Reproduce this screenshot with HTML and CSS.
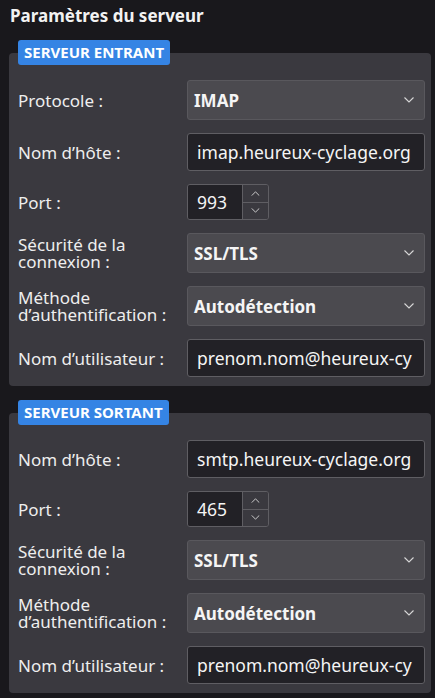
FILE: index.html
```html
<!DOCTYPE html>
<html>
<head>
  <title>Paramètres du serveur</title>
  <link rel="stylesheet" href="styles.css">
</head>
<body>
  <h1 class="page-title">Paramètres du serveur</h1>

  <section class="server">
    <div class="badge">SERVEUR ENTRANT</div>
    <div class="card">
      <label class="label">Protocole :</label>
      <div class="select"><span>IMAP</span>
        <svg class="chevron" viewBox="0 0 10 6"><path d="M0.5 0.5 L5 5 L9.5 0.5"/></svg>
      </div>

      <label class="label">Nom d’hôte :</label>
      <div class="input">imap.heureux-cyclage.org</div>

      <label class="label">Port :</label>
      <div class="spin">
        <div class="spin-value">993</div>
        <div class="spin-buttons">
          <div class="spin-btn"><svg viewBox="0 0 10 6"><path d="M0.5 5.5 L5 1 L9.5 5.5"/></svg></div>
          <div class="spin-btn"><svg viewBox="0 0 10 6"><path d="M0.5 0.5 L5 5 L9.5 0.5"/></svg></div>
        </div>
      </div>

      <label class="label">Sécurité de la connexion :</label>
      <div class="select"><span>SSL/TLS</span>
        <svg class="chevron" viewBox="0 0 10 6"><path d="M0.5 0.5 L5 5 L9.5 0.5"/></svg>
      </div>

      <label class="label">Méthode d’authentification :</label>
      <div class="select"><span>Autodétection</span>
        <svg class="chevron" viewBox="0 0 10 6"><path d="M0.5 0.5 L5 5 L9.5 0.5"/></svg>
      </div>

      <label class="label">Nom d’utilisateur :</label>
      <div class="input">prenom.nom@heureux-cy</div>
    </div>
  </section>

  <section class="server">
    <div class="badge">SERVEUR SORTANT</div>
    <div class="card">
      <label class="label">Nom d’hôte :</label>
      <div class="input">smtp.heureux-cyclage.org</div>

      <label class="label">Port :</label>
      <div class="spin">
        <div class="spin-value">465</div>
        <div class="spin-buttons">
          <div class="spin-btn"><svg viewBox="0 0 10 6"><path d="M0.5 5.5 L5 1 L9.5 5.5"/></svg></div>
          <div class="spin-btn"><svg viewBox="0 0 10 6"><path d="M0.5 0.5 L5 5 L9.5 0.5"/></svg></div>
        </div>
      </div>

      <label class="label">Sécurité de la connexion :</label>
      <div class="select"><span>SSL/TLS</span>
        <svg class="chevron" viewBox="0 0 10 6"><path d="M0.5 0.5 L5 5 L9.5 0.5"/></svg>
      </div>

      <label class="label">Méthode d’authentification :</label>
      <div class="select"><span>Autodétection</span>
        <svg class="chevron" viewBox="0 0 10 6"><path d="M0.5 0.5 L5 5 L9.5 0.5"/></svg>
      </div>

      <label class="label">Nom d’utilisateur :</label>
      <div class="input">prenom.nom@heureux-cy</div>
    </div>
  </section>
</body>
</html>
```

FILE: styles.css
```css
body {
  margin: 0;
  padding: 0 4px 0 9px;
  background-color: #19181c;
  color: #eeeeee;
  font-family: "Noto Sans", "Open Sans", sans-serif;
  font-size: 17px;
}

.page-title {
  margin: 0;
  padding: 4px 0 0 1px;
  font-size: 17px;
  font-weight: bold;
  line-height: 24px;
  color: #f2f2f2;
}

.server {
  margin-top: 12px;
}

.server + .server {
  margin-top: 14px;
}

.badge {
  position: relative;
  z-index: 1;
  display: inline-block;
  margin-left: 9px;
  padding: 0 6px;
  height: 25px;
  line-height: 25px;
  background-color: #3584e4;
  border-radius: 3px;
  color: #ffffff;
  font-size: 15px;
  font-weight: bold;
}

.card {
  margin-top: -12px;
  padding: 27px 6px 9px 9px;
  background-color: #3a393f;
  border-radius: 4px;
  display: grid;
  grid-template-columns: 169px 1fr;
  row-gap: 13px;
  align-items: center;
}

.label {
  font-size: 17px;
  line-height: 17px;
  color: #eeeeee;
  padding-right: 6px;
}

.select {
  height: 40px;
  box-sizing: border-box;
  display: flex;
  align-items: center;
  justify-content: space-between;
  padding: 0 10px 0 6px;
  background-color: #4b4a4f;
  border: 1px solid #59585d;
  border-radius: 3px;
  font-weight: bold;
  color: #f5f5f5;
}

.chevron {
  width: 10px;
  height: 6px;
}

.chevron path,
.spin-btn path {
  fill: none;
  stroke: #d8d8d8;
  stroke-width: 1.1;
}

.input {
  height: 38px;
  box-sizing: border-box;
  padding: 0 9px;
  line-height: 36px;
  font-size: 17.5px;
  background-color: #222126;
  border: 1px solid #5f5e63;
  border-radius: 3px;
  color: #f5f5f5;
  white-space: nowrap;
  overflow: hidden;
}

.spin {
  width: 82px;
  height: 36px;
  box-sizing: border-box;
  display: flex;
  border: 1px solid #5f5e63;
  border-radius: 3px;
  overflow: hidden;
}

.spin-value {
  width: 55px;
  box-sizing: border-box;
  padding-left: 9px;
  line-height: 34px;
  font-size: 17.5px;
  background-color: #222126;
  border-right: 1px solid #5f5e63;
  color: #f5f5f5;
}

.spin-buttons {
  flex: 1;
  display: flex;
  flex-direction: column;
  background-color: #3a393f;
}

.spin-btn {
  flex: 1;
  display: flex;
  align-items: center;
  justify-content: center;
}

.spin-btn + .spin-btn {
  border-top: 1px solid #5f5e63;
}

.spin-btn svg {
  width: 9px;
  height: 5px;
}
```
